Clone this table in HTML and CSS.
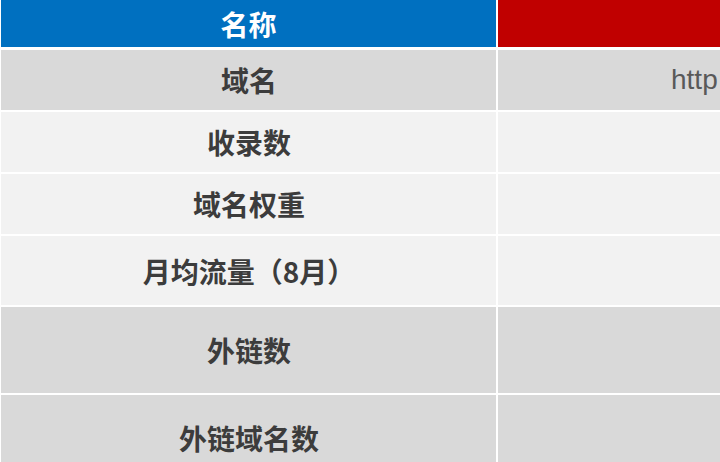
FILE: index.html
```html
<!DOCTYPE html>
<html lang="zh-CN">
<head>
<meta charset="utf-8">
<link rel="stylesheet" href="styles.css">
</head>
<body>
<div class="table">
  <div class="cell head head-name">名称</div>
  <div class="cell head head-site"></div>

  <div class="cell label dark r60">域名</div>
  <div class="cell value dark r60"><span class="url">http</span></div>

  <div class="cell label light r60">收录数</div>
  <div class="cell value light r60"></div>

  <div class="cell label light r60">域名权重</div>
  <div class="cell value light r60"></div>

  <div class="cell label light r69">月均流量（8月）</div>
  <div class="cell value light r69"></div>

  <div class="cell label dark r86">外链数</div>
  <div class="cell value dark r86"></div>

  <div class="cell label dark r86">外链域名数</div>
  <div class="cell value dark r86"></div>
</div>
</body>
</html>
```

FILE: styles.css
```css
html, body {
  margin: 0;
  padding: 0;
  background: #ffffff;
  width: 720px;
  height: 462px;
  overflow: hidden;
}

.table {
  display: grid;
  grid-template-columns: 495px 222px;
  column-gap: 2px;
  row-gap: 2px;
  padding-left: 1px;
  background: #ffffff;
  font-family: "Noto Sans CJK SC", "Noto Sans", sans-serif;
}

.cell {
  display: flex;
  align-items: center;
  justify-content: center;
  overflow: hidden;
  white-space: nowrap;
}

.head {
  height: 47px;
  margin-bottom: 1px;
  color: #ffffff;
  font-size: 28px;
  font-weight: 700;
}

.head-name {
  background: #0070c0;
}

.head-site {
  background: #c00000;
}

.label {
  font-size: 28px;
  font-weight: 700;
  color: #3c3c3c;
  padding-left: 1px;
}

.value {
  justify-content: flex-start;
  padding-left: 173px;
}

.url {
  font-family: "Liberation Sans", Arial, sans-serif;
  font-size: 28px;
  color: #595959;
}

.dark {
  background: #d9d9d9;
}

.light {
  background: #f2f2f2;
}

.r60 {
  height: 60px;
}

.r69 {
  height: 69px;
}

.r86 {
  height: 86px;
}
```
